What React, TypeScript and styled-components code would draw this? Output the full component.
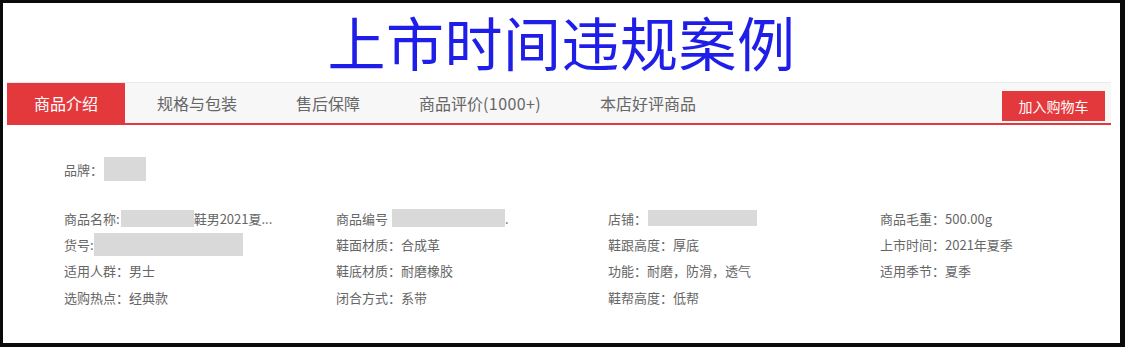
import React from "react";
import styled, { createGlobalStyle } from "styled-components";

const GlobalStyle = createGlobalStyle`
  html, body {
    margin: 0;
    padding: 0;
    background: #ffffff;
  }
  body {
    font-family: "Noto Sans CJK SC", "Noto Sans", sans-serif;
  }
`;

const Frame = styled.div`
  width: 1125px;
  height: 347px;
  box-sizing: border-box;
  border-style: solid;
  border-color: #0a0a0a;
  border-width: 3px 5px 4px 3px;
  background: #ffffff;
  display: flex;
  flex-direction: column;
`;

const Title = styled.h1`
  margin: 0;
  height: 79px;
  display: flex;
  align-items: center;
  justify-content: center;
  font-family: "Noto Sans CJK SC", sans-serif;
  font-weight: 400;
  font-size: 58px;
  letter-spacing: 0.5px;
  color: #1e1ee8;
  padding-bottom: 4px;
  box-sizing: border-box;
`;

const TabBar = styled.div`
  margin: 0 9px 0 4px;
  height: 43px;
  box-sizing: border-box;
  display: flex;
  align-items: stretch;
  gap: 5px;
  background: #f7f7f7;
  border-top: 1px solid #ebebeb;
  border-bottom: 2px solid #e4393c;
`;

const Tab = styled.div<{ $active?: boolean }>`
  display: flex;
  align-items: center;
  padding: 0 27px;
  font-size: 16px;
  color: ${(p) => (p.$active ? "#ffffff" : "#666666")};
  background: ${(p) => (p.$active ? "#e4393c" : "transparent")};
`;

const Count = styled.span`
  letter-spacing: 0.4px;
`;

const CartButton = styled.button`
  margin: 8px 6px 2px auto;
  width: 103px;
  border: none;
  background: #e4393c;
  color: #ffffff;
  font-family: inherit;
  font-size: 14px;
  padding: 0;
`;

const Content = styled.div`
  padding: 32px 0 0 61px;
  color: #666666;
  font-size: 13px;
`;

const Brand = styled.div`
  display: flex;
  align-items: center;
  height: 24px;
`;

const Blur = styled.span<{ $w: number; $h: number; $gap?: number }>`
  display: inline-block;
  width: ${(p) => p.$w}px;
  height: ${(p) => p.$h}px;
  margin-left: ${(p) => p.$gap ?? 0}px;
  background: #d9d9d9;
  vertical-align: middle;
`;

const Grid = styled.div`
  margin-top: 24px;
  display: grid;
  grid-template-columns: repeat(4, 272px);
  grid-auto-rows: 26.3px;
  align-items: center;
`;

const Cell = styled.div`
  display: flex;
  align-items: center;
  white-space: nowrap;
  height: 26px;
`;

const App: React.FC = () => {
  return (
    <Frame>
      <GlobalStyle />
      <Title>上市时间违规案例</Title>
      <TabBar>
        <Tab $active>商品介绍</Tab>
        <Tab>规格与包装</Tab>
        <Tab>售后保障</Tab>
        <Tab>
          商品评价<Count>(1000+)</Count>
        </Tab>
        <Tab>本店好评商品</Tab>
        <CartButton>加入购物车</CartButton>
      </TabBar>
      <Content>
        <Brand>
          品牌：
          <Blur $w={42} $h={24} $gap={1} />
        </Brand>
        <Grid>
          <Cell>
            商品名称:
            <Blur $w={73} $h={17} $gap={1} />
            鞋男2021夏...
          </Cell>
          <Cell>
            商品编号
            <Blur $w={113} $h={18} $gap={4} />.
          </Cell>
          <Cell>
            店铺：
            <Blur $w={109} $h={16} $gap={1} />
          </Cell>
          <Cell>商品毛重：500.00g</Cell>
          <Cell>
            货号:
            <Blur $w={149} $h={23} />
          </Cell>
          <Cell>鞋面材质：合成革</Cell>
          <Cell>鞋跟高度：厚底</Cell>
          <Cell>上市时间：2021年夏季</Cell>
          <Cell>适用人群：男士</Cell>
          <Cell>鞋底材质：耐磨橡胶</Cell>
          <Cell>功能：耐磨，防滑，透气</Cell>
          <Cell>适用季节：夏季</Cell>
          <Cell>选购热点：经典款</Cell>
          <Cell>闭合方式：系带</Cell>
          <Cell>鞋帮高度：低帮</Cell>
        </Grid>
      </Content>
    </Frame>
  );
};

export default App;
